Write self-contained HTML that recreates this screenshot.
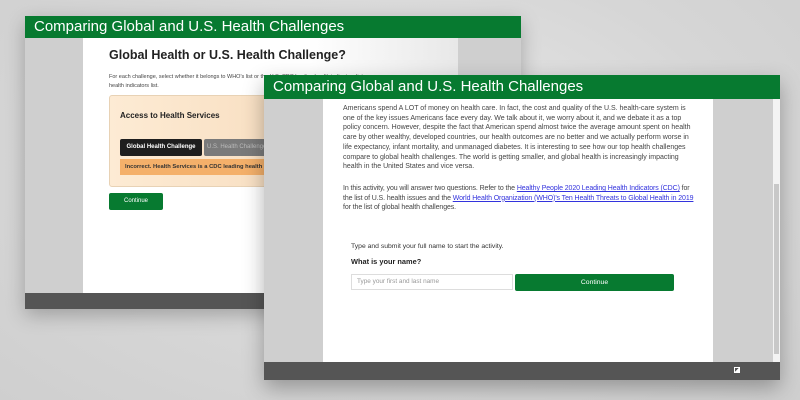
<!DOCTYPE html>
<html><head><style>
*{margin:0;padding:0;box-sizing:border-box}
body{width:800px;height:400px;overflow:hidden;font-family:"Liberation Sans",sans-serif;background:radial-gradient(ellipse at 50% 40%,#e8e8e8 0%,#d6d6d6 60%,#cfcfcf 100%);position:relative}
.abs{position:absolute}
.hdr{background:#077a30;color:#fff;}
</style></head><body>
<!-- window 1 -->
<div class="abs" style="left:25px;top:16px;width:496px;height:293px;background:#cfcfcf;box-shadow:0 6px 18px rgba(0,0,0,.25)">
 <div class="abs hdr" style="left:0;top:0;width:496px;height:22px;font-size:15px;line-height:22px;padding-left:9px">Comparing Global and U.S. Health Challenges</div>
 <div class="abs" style="left:58px;top:22px;width:375px;height:255px;background:linear-gradient(90deg,#fff 60%,#e8e8e8)">
  <div class="abs" style="left:26px;top:10px;font-size:12.5px;font-weight:bold;color:#222">Global Health or U.S. Health Challenge?</div>
  <div class="abs" style="left:26px;top:35px;width:340px;font-size:5.5px;line-height:8.5px;color:#444">For each challenge, select whether it belongs to WHO's list or the U.S. CDC leading health indicators list.<br>health indicators list.</div>
  <div class="abs" style="left:26px;top:57px;width:340px;height:92px;background:linear-gradient(90deg,#fdebd4,#f3d3b0);border:1px solid #e8d2b5;border-radius:3px">
   <div class="abs" style="left:10px;top:15px;font-size:8px;font-weight:bold;color:#222">Access to Health Services</div>
   <div class="abs" style="left:10px;top:43px;width:82px;height:17px;background:#1e1e1e;border-radius:2px;color:#fff;font-size:6px;font-weight:bold;line-height:17px;text-align:center">Global Health Challenge</div>
   <div class="abs" style="left:94px;top:43px;width:70px;height:17px;background:#7a7a7a;border-radius:2px;color:#bbb;font-size:6px;line-height:17px;padding-left:3px">U.S. Health Challenge</div>
   <div class="abs" style="left:10px;top:63px;width:320px;height:16px;background:#f4b06a;font-size:5.8px;font-weight:bold;line-height:16px;padding-left:5px;color:#333">Incorrect. Health Services is a CDC leading health indicator.</div>
  </div>
  <div class="abs" style="left:26px;top:155px;width:54px;height:17px;background:#077a30;border-radius:2px;color:#fff;font-size:6px;line-height:17px;text-align:center">Continue</div>
 </div>
 <div class="abs" style="left:0;top:277px;width:496px;height:16px;background:#555"></div>
</div>
<!-- window 2 -->
<div class="abs" style="left:264px;top:75px;width:516px;height:305px;background:#cfcfcf;box-shadow:0 8px 20px rgba(0,0,0,.3)">
 <div class="abs hdr" style="left:0;top:0;width:516px;height:24px;font-size:15px;line-height:24px;padding-left:9px">Comparing Global and U.S. Health Challenges</div>
 <div class="abs" style="left:59px;top:24px;width:390px;height:263px;background:#fff">
  <div class="abs" style="left:20px;top:5px;width:350px;font-size:7px;line-height:9.7px;color:#444">Americans spend A LOT of money on health care. In fact, the cost and quality of the U.S. health-care system is one of the key issues Americans face every day. We talk about it, we worry about it, and we debate it as a top policy concern. However, despite the fact that American spend almost twice the average amount spent on health care by other wealthy, developed countries, our health outcomes are no better and we actually perform worse in life expectancy, infant mortality, and unmanaged diabetes. It is interesting to see how our top health challenges compare to global health challenges. The world is getting smaller, and global health is increasingly impacting health in the United States and vice versa.</div>
  <div class="abs" style="left:20px;top:85px;width:356px;font-size:7px;line-height:9.7px;color:#444;letter-spacing:-0.1px">In this activity, you will answer two questions. Refer to the <u style="color:#3333dd">Healthy People 2020 Leading Health Indicators (CDC)</u> for the list of U.S. health issues and the <u style="color:#3333dd">World Health Organization (WHO)'s Ten Health Threats to Global Health in 2019</u> for the list of global health challenges.</div>
  <div class="abs" style="left:28px;top:144px;font-size:6.8px;color:#333">Type and submit your full name to start the activity.</div>
  <div class="abs" style="left:28px;top:158px;font-size:7.4px;font-weight:bold;color:#222">What is your name?</div>
  <div class="abs" style="left:28px;top:175px;width:162px;height:16px;border:1px solid #ddd;font-size:6.4px;line-height:14px;padding-left:5px;color:#999">Type your first and last name</div>
  <div class="abs" style="left:192px;top:175px;width:159px;height:17px;background:#077a30;border-radius:2px;color:#fff;font-size:6.8px;line-height:17px;text-align:center">Continue</div>
 </div>
 <div class="abs" style="left:509px;top:24px;width:7px;height:263px;background:#f3f3f3"><div style="margin:85px 1px 0;height:170px;background:#c8c8c8"></div></div>
 <div class="abs" style="left:0;top:287px;width:516px;height:18px;background:#555"><div class="abs" style="left:470px;top:5px;width:6px;height:6px;border:1px solid #fff;background:linear-gradient(135deg,#555 50%,#fff 50%)"></div></div>
</div>
</body></html>
